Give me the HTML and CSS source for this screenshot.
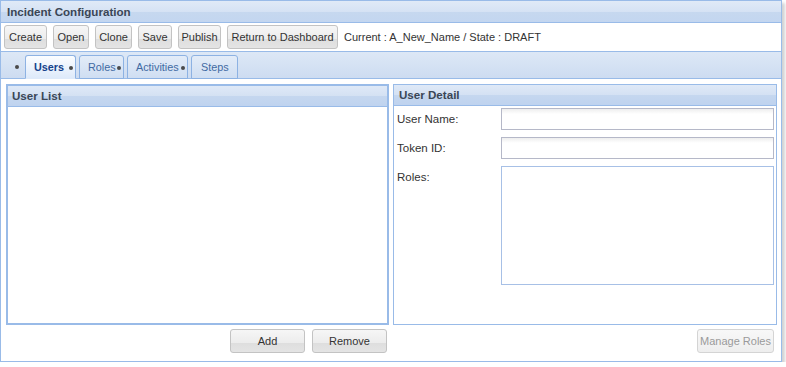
FILE: index.html
```html
<!DOCTYPE html>
<html>
<head>
<meta charset="utf-8">
<link rel="stylesheet" href="styles.css">
</head>
<body>
<div class="win">
  <div class="hdr">Incident Configuration</div>
  <div class="toolbar">
    <button class="btn b-create">Create</button>
    <button class="btn b-open">Open</button>
    <button class="btn b-clone">Clone</button>
    <button class="btn b-save">Save</button>
    <button class="btn b-publish">Publish</button>
    <button class="btn b-return">Return to Dashboard</button>
    <span class="status">Current : A_New_Name / State : DRAFT</span>
  </div>
  <div class="tabbar">
    <span class="dot lead"></span>
    <div class="tab active t-users">Users<span class="dot"></span></div>
    <div class="tab t-roles">Roles<span class="dot"></span></div>
    <div class="tab t-acts">Activities<span class="dot"></span></div>
    <div class="tab t-steps">Steps</div>
  </div>
  <div class="content">
    <div class="col left">
      <div class="sub list">
        <div class="subhdr">User List</div>
        <div class="subbody"></div>
      </div>
      <div class="actions">
        <button class="btn wide">Add</button>
        <button class="btn wide">Remove</button>
      </div>
    </div>
    <div class="col right">
      <div class="sub detail">
        <div class="subhdr">User Detail</div>
        <div class="form">
          <div class="row"><label>User Name:</label><input class="field" type="text"></div>
          <div class="row"><label>Token ID:</label><input class="field" type="text"></div>
          <div class="row"><label>Roles:</label><textarea class="area"></textarea></div>
        </div>
      </div>
      <div class="actions">
        <button class="btn wide disabled">Manage Roles</button>
      </div>
    </div>
  </div>
</div>
</body>
</html>
```

FILE: styles.css
```css
* { box-sizing: border-box; }
body {
  margin: 0;
  background: #fff;
  font-family: "Liberation Sans", Arial, sans-serif;
  font-size: 11px;
  color: #333;
}
.win {
  width: 782px;
  height: 362px;
  border: 1px solid #99bbe8;
  display: flex;
  flex-direction: column;
  box-shadow: 3px 3px 3px rgba(0,0,0,0.18);
  background: #fff;
}
.hdr {
  height: 22px;
  border-bottom: 1px solid #99bbe8;
  background: linear-gradient(#e0eaf7 0, #d5e2f4 11px, #c6d8ef 11px, #c3d6f0 100%);
  font-weight: bold;
  color: #3a4656;
  padding: 4px 0 0 6px;
  font-size: 11.6px;
}
.toolbar {
  height: 29px;
  display: flex;
  align-items: center;
  padding: 0 0 0 3px;
  gap: 6px;
  border-bottom: 1px solid #99bbe8;
}
.btn {
  height: 24px;
  border: 1px solid #c3c3c3;
  border-radius: 3px;
  background: linear-gradient(#f6f6f6 0, #ececec 60%, #dedede 60%, #e4e4e4 100%);
  font-family: "Liberation Sans", Arial, sans-serif;
  font-size: 11px;
  color: #333;
  padding: 0;
  margin: 0;
  white-space: nowrap;
  text-align: center;
}
.b-create { width: 43px; }
.b-open { width: 36px; }
.b-clone { width: 37px; }
.b-save { width: 34px; }
.b-publish { width: 43px; }
.b-return { width: 111px; }
.status { color: #333; font-size: 11px; }
.tabbar {
  height: 27px;
  background: linear-gradient(#dde8f6, #cddcf1);
  border-bottom: 1px solid #99bbe8;
  display: flex;
  align-items: flex-end;
  padding-left: 14px;
  gap: 3px;
}
.tab {
  height: 24px;
  border: 1px solid #8db2e3;
  border-radius: 3px 3px 0 0;
  background: linear-gradient(#e3ecf8, #cfdef2);
  color: #416aa3;
  font-size: 10.8px;
  padding: 5px 0 0 8px;
  margin-bottom: -1px;
  display: flex;
  align-items: flex-start;
  white-space: nowrap;
}
.t-users { width: 51px; }
.t-roles { width: 45px; }
.t-acts { width: 61px; }
.t-steps { width: 47px; padding-left: 9px; }
.tab.active {
  background: linear-gradient(#fbfdff, #deeafa);
  color: #15428b;
  font-weight: bold;
  border-bottom-color: #deeafa;
}
.dot {
  display: inline-block;
  flex: none;
  width: 4px;
  height: 4px;
  border-radius: 50%;
  background: #4a4a4a;
  margin: 5px 0 0 auto;
}
.tab .dot { margin-right: 2px; }
.dot.lead { align-self: center; margin: 3px 3px 0 0; }
.content {
  flex: 1;
  display: flex;
  gap: 4px;
  padding: 5px 4px 0 5px;
}
.col {
  display: flex;
  flex-direction: column;
}
.col.left { width: 383px; }
.col.right { width: 384px; }
.sub {
  height: 241px;
  display: flex;
  flex-direction: column;
  border: 1px solid #99bbe8;
}
.sub.list { border-width: 2px; }
.subhdr {
  height: 21px;
  flex: none;
  background: linear-gradient(#dfe9f7 0, #d4e1f3 10px, #c5d7ef 10px, #bfd3ef 100%);
  border-bottom: 1px solid #99bbe8;
  font-weight: bold;
  font-size: 11.6px;
  color: #3a4656;
  padding: 3px 0 0 4px;
}
.detail .subhdr { padding-left: 5px; }
.subbody { flex: 1; background: #fff; }
.form {
  padding: 2px 2px 0 3px;
  display: flex;
  flex-direction: column;
  gap: 7px;
}
.row { display: flex; }
.row label {
  width: 104px;
  color: #333;
  font-size: 11.5px;
  padding-top: 5px;
}
.field {
  width: 273px;
  height: 22px;
  border: 1px solid #b5b8c8;
  background: linear-gradient(#eeeeee, #ffffff 5px);
  margin: 0;
  padding: 0 3px;
  font-family: inherit;
}
.area {
  width: 273px;
  height: 119px;
  border: 1px solid #a7c0e6;
  background: #fff;
  margin: 0;
  resize: none;
  font-family: inherit;
}
.actions {
  display: flex;
  justify-content: flex-end;
  gap: 7px;
  padding-top: 4px;
}
.btn.wide { width: 75px; }
.left .actions { padding-right: 2px; }
.right .actions { padding-right: 3px; }
.btn.disabled { width: 77px; padding: 0; color: #9a9a9a; background: linear-gradient(#f8f8f8, #eeeeee); border-color: #d4d4d4; }
```
